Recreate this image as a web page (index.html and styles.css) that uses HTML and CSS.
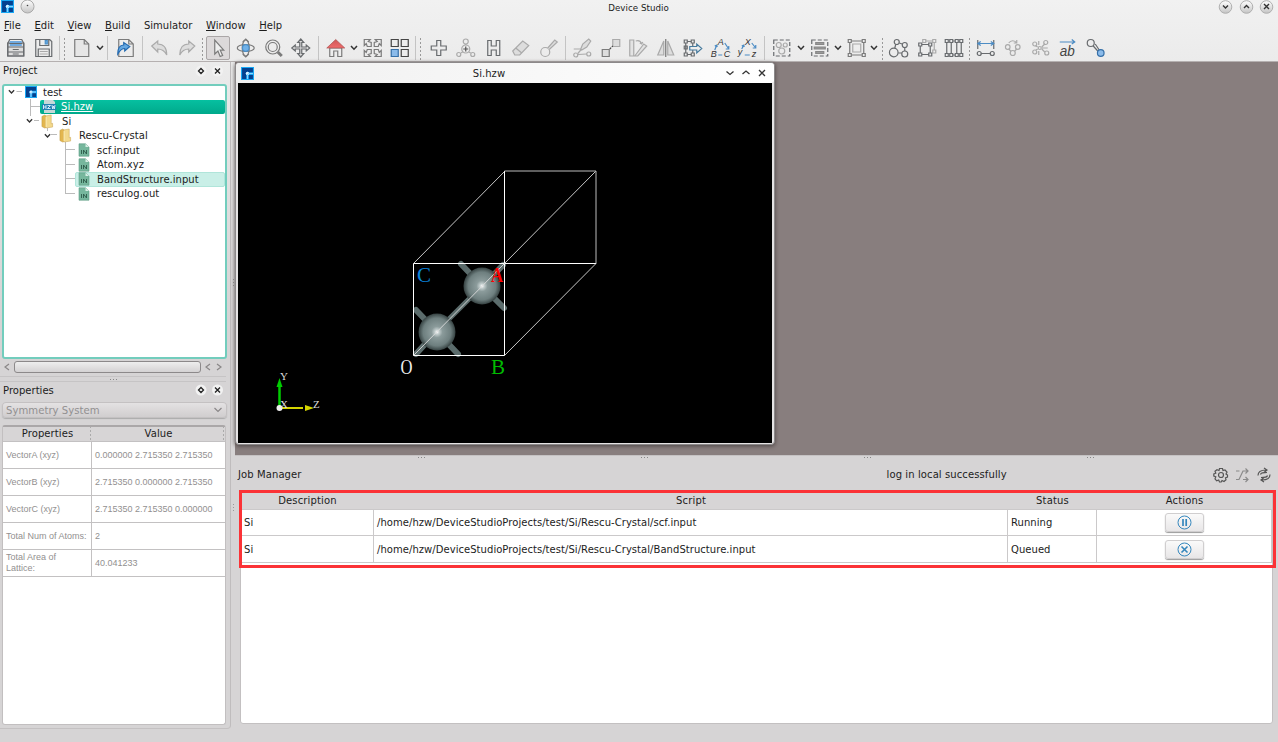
FILE: index.html
```html
<!DOCTYPE html>
<html lang="en">
<head>
<meta charset="utf-8">
<title>Device Studio</title>
<link rel="stylesheet" href="styles.css">
</head>
<body>
<svg class="defs" width="0" height="0">
  <defs>
    <symbol id="logo" viewBox="0 0 12 12"><path fill="#18a8f5" d="M0 0h12v12H0z"/><path fill="#05418f" d="M1 1h10v3.800H7L6 4.200 4.200 6 4.800 7v4H1zM7.300 7.300H11V11H7.300z"/><circle cx="6" cy="6" r="1.600" fill="#d8f1ff"/><path fill="#8fd4ff" d="M6.500 5.500H11v1H6.500zM5.500 6.500h1V11h-1z"/></symbol>
    <symbol id="folder" viewBox="0 0 14 16"><path fill="#e3b64e" stroke="#b98f35" stroke-width=".5" d="M1 2.500L4 1l2 1.500V14l-2 1-3-1.500z"/><path fill="#f3d98c" stroke="#c49b42" stroke-width=".5" d="M5 2l6-1v9.500l1.500-.5v4L5 15z"/><path stroke="#fff1bd" d="M5.500 3v11"/></symbol>
    <symbol id="infile" viewBox="0 0 12 14"><path fill="#76b79d" stroke="#5d9a83" stroke-width=".6" d="M1 .8h6.500L11 4v9.200H1z"/><path fill="#d8efe5" d="M7.500.8V4H11z"/><path fill="none" stroke="#2c5a4a" stroke-width=".9" d="M3.500 7v4M5.500 11V7l3 4V7"/></symbol>
    <symbol id="caret" viewBox="0 0 8 6"><path fill="none" stroke="#333" stroke-width="1.500" d="M1 1l3 3.200L7 1"/></symbol>
    <linearGradient id="pill" x2="0" y2="1"><stop stop-color="#fff"/><stop offset="1" stop-color="#c4c4c4"/></linearGradient>
    <linearGradient id="red" x2="0" y2="1"><stop stop-color="#ce5757"/><stop offset="1" stop-color="#ef6b6b"/></linearGradient>
    <radialGradient id="atom"><stop stop-color="#fff"/><stop offset=".12" stop-color="#c2cdcd"/><stop offset=".3" stop-color="#8b9b9b"/><stop offset=".75" stop-color="#6e7f7f"/><stop offset="1" stop-color="#354141"/></radialGradient>
  </defs>
</svg>

<header class="top">
  <div class="titlebar">
    <svg class="app-logo" width="13" height="13"><use href="#logo"/></svg>
    <svg class="orb" width="15" height="15"><circle cx="7.500" cy="7.500" r="6.500" fill="url(#pill)" stroke="#aaa"/><circle cx="7.500" cy="6.500" r=".8" fill="#444"/></svg>
    <span class="title">Device Studio</span>
    <div class="winbtns">
      <svg width="15" height="15"><circle cx="7.500" cy="7" r="6.300" fill="url(#pill)" stroke="#b0b0b0"/><path d="M5 5.500L7.500 8 10 5.500"/></svg>
      <svg width="15" height="15"><circle cx="7.500" cy="7" r="6.300" fill="url(#pill)" stroke="#b0b0b0"/><path d="M5 8L7.500 5.500 10 8"/></svg>
      <svg width="15" height="15"><circle cx="7.500" cy="7" r="6.300" fill="url(#pill)" stroke="#b0b0b0"/><path d="M5 4l5 5M10 4L5 9"/></svg>
    </div>
  </div>
  <nav class="menu">
    <span><u>F</u>ile</span><span><u>E</u>dit</span><span><u>V</u>iew</span><span><u>B</u>uild</span><span>Simulator</span><span><u>W</u>indow</span><span><u>H</u>elp</span>
  </nav>
  <div class="toolbar">
    <svg class="ic dk" viewBox="0 0 20 20"><path fill="#ddd" d="M2 5h16v13H2z"/><path fill="#6fa9e0" stroke="none" d="M4 3h12v5H4z"/><path d="M4 1.500h12l2 4v12.500H2V5.500zM2 9h16M2 14h16M7 11.500h6M7 16h6M3.500 5.500h13"/></svg>
    <svg class="ic dk" viewBox="0 0 20 20"><path d="M2 1.500h14l2 2V18.500H2zM6 1.500v6h9v-6M4.500 18v-7h11v7"/><path class="bf" d="M11.500 2.500h2v3.500h-2z"/><path class="lt" d="M6 13.500h8M6 16h8"/></svg>
    <div class="sep w11"><i></i><b></b></div>
    <svg class="ic" viewBox="0 0 20 20"><path fill="#e6e6e6" d="M3 1.500h9.500L17 6v12.500H3z"/><path d="M12.500 1.500V6H17"/></svg>
    <div class="dd w8"><svg width="8" height="6"><use href="#caret"/></svg></div>
    <div class="sep w8"><i></i></div>
    <svg class="ic" viewBox="0 0 20 20"><path d="M3 1.500h10l4.500 4.500v12.500H3zM13 1.500V6h4.500"/><path fill="#66a8e1" stroke="#246ab0" d="M2 16c0-6 2-9 6-9V4.500l6 4-5 4.500v-2.500c-3 0-5 2-7 5.500z"/></svg>
    <div class="sep w6"><i></i></div>
    <svg class="ic lt" viewBox="0 0 20 20"><path fill="#ddd" d="M2 8l6-5v3c6 0 9 4 9 11-2-4-4-6-9-6v3z"/></svg>
    <svg class="ic lt" viewBox="0 0 20 20"><path fill="#ddd" d="M18 8l-6-5v3C6 6 3 10 3 17c2-4 4-6 9-6v3z"/></svg>
    <div class="sep w4"><b></b></div>
    <div class="pressed"><svg class="ic" viewBox="0 0 20 20"><path fill="#eee" d="M6 2v14l3.200-3 2.200 5.500 2.500-1-2.400-5.300H15z"/></svg></div>
    <svg class="ic" viewBox="0 0 20 20"><ellipse cx="10" cy="10" rx="8.500" ry="3.500"/><ellipse cx="10" cy="10" rx="3.500" ry="8"/><circle class="bf" cx="10" cy="10" r="3.300"/><path d="M7 4l3-3 3 3M7 16l3 3 3-3"/></svg>
    <svg class="ic" viewBox="0 0 20 20"><circle cx="9" cy="9" r="7"/><circle cx="9" cy="9" r="4.500"/><path stroke-width="3" d="M14 14l4 4"/></svg>
    <svg class="ic dk" viewBox="0 0 20 20"><path fill="#ddd" d="M10 1l3 3.500h-2v4.500h4.500V7L19 10l-3.500 3v-2H11v4.500h2L10 19l-3-3.500h2V11H4.500v2L1 10l3.500-3v2H9V4.500H7z"/></svg>
    <div class="sep w7"><i></i></div>
    <svg class="ic" viewBox="0 0 20 20"><path fill="#eee" d="M4 10h12v8.500h-4V13H8v5.500H4z"/><path fill="url(#red)" stroke="#a95050" stroke-width=".7" d="M10 1.500L19 10H1z"/></svg>
    <div class="dd w9"><svg width="8" height="6"><use href="#caret"/></svg></div>
    <svg class="ic" viewBox="0 0 20 20"><path d="M1.500 1.500h6l-2 2 3 1v4h-4l-1-3-2 2zM18.500 1.500h-6l2 2-3 1v4h4l1-3 2 2zM1.500 18.500h6l-2-2 3-1v-4h-4l-1 3-2-2zM18.500 18.500h-6l2-2-3-1v-4h4l1 3 2-2z"/></svg>
    <svg class="ic" viewBox="0 0 20 20"><path stroke="#444" d="M1.500 1.500h7v7h-7zM11.500 1.500h7v7h-7zM11.500 11.500h7v7h-7z"/><path fill="#8bbbea" stroke="#356fa8" d="M1.500 11.500h7v7h-7z"/></svg>
    <div class="sep w11"><i></i><b></b></div>
    <svg class="ic dk" viewBox="0 0 20 20"><path d="M8 2.500h4V8h5.500v4H12v5.500H8V12H2.500V8H8z"/></svg>
    <svg class="ic lt" viewBox="0 0 20 20"><circle cx="10" cy="3.500" r="2.500"/><circle cx="10" cy="11" r="4"/><circle cx="3" cy="16.500" r="2"/><circle cx="17" cy="16.500" r="2"/><path d="M10 6v1M7 14l-2 1M13 14l2 1"/><path stroke="#555" d="M7.500 11h5M10 8.500v5"/></svg>
    <svg class="ic dk" viewBox="0 0 20 20"><path d="M4 2.500h3.500V8h5V2.500H16v15h-3.500V12h-5v5.500H4z"/></svg>
    <svg class="ic lt" viewBox="0 0 20 20"><path fill="#ddd" d="M2 13L12 3l6 4.500L9 17H4zM5 10l6 5"/></svg>
    <svg class="ic lt" viewBox="0 0 20 20"><circle cx="6.500" cy="14" r="4.500"/><path fill="#ddd" d="M9 10l7-8 2.500 2-8 7.500"/></svg>
    <div class="sep w7"><i></i></div>
    <svg class="ic lt" viewBox="0 0 20 20"><path fill="#ddd" d="M8 11l2-5 6-5 2 2-4 6-5 3z"/><circle cx="3" cy="17" r="2"/><circle cx="16" cy="16" r="2"/><path d="M5 16.500l9-.5M1 11h7M8.500 11.500L5 15.500"/></svg>
    <svg class="ic" viewBox="0 0 20 20"><path fill="#ddd" d="M1.500 11.500h7v7h-7z"/><path class="lt" fill="#ddd" d="M12 1.500h7v7h-7z"/><path stroke="#444" stroke-dasharray="2 1" d="M9 11l3-3"/></svg>
    <svg class="ic lt" viewBox="0 0 20 20"><path fill="#e3e3e3" d="M2 2h4v16H2zM7 18L16 6l3 2-9 10z"/><path d="M8 3c3-1 5 0 6 3M12 5l2 1 1-2"/></svg>
    <svg class="ic lt" viewBox="0 0 20 20"><path fill="#ddd" d="M8 3v14H2zM12 3v14h6z"/><path stroke="#777" d="M10 1v18"/></svg>
    <svg class="ic dk" viewBox="0 0 20 20"><path d="M1.500 2h3v3h-3zM8.500 2h3v3h-3zM1.500 15h3v3h-3zM8.500 15h3v3h-3zM1.500 8h3v3h-3zM3 5v10M10 5v3M10 12v3M5 3.500h3.500M5 16.500h3.500"/><path fill="#eee" stroke="#477b9e" d="M7 8.500h7V6l5 4.500-5 4.500v-3H7z"/></svg>
    <svg class="ic" viewBox="0 0 20 20"><path class="bl" d="M4 12l2-5M14 5l4 6M7.500 17h4M4 8l2-1 .500 2M18 8v3h-3"/><text x="7" y="7">A</text><text x="0" y="19">B</text><text x="13" y="19">C</text></svg>
    <svg class="ic" viewBox="0 0 20 20"><path class="bl" d="M4 11l2-4M14 5l4 5M7 17h5M4 8l2-1 .500 2M18 7v3h-3"/><text x="7" y="7">X</text><text x="0" y="17">y</text><text x="14" y="19">z</text></svg>
    <div class="sep w6"><i></i></div>
    <svg class="ic dk" viewBox="0 0 20 20"><path stroke-dasharray="4 2" d="M2 2h16v16H2z"/><circle class="lt" cx="7" cy="7" r="2.500"/><circle class="lt" cx="13.500" cy="7" r="2"/><circle class="lt" cx="10" cy="13" r="3"/></svg>
    <div class="dd w10"><svg width="8" height="6"><use href="#caret"/></svg></div>
    <svg class="ic dk" viewBox="0 0 20 20"><path stroke-dasharray="4 2" d="M2 2h16v16H2z"/><path fill="#999" stroke="#888" d="M6 4.500h8v2H6zM4.500 9h11v2h-11zM6 13.500h8v2H6z"/></svg>
    <div class="dd w10"><svg width="8" height="6"><use href="#caret"/></svg></div>
    <svg class="ic" viewBox="0 0 20 20"><path class="lt" d="M6 6h8v8H6z"/><path d="M3 5v10M17 5v10M5 3h10M5 17h10M1.500 1.500h3v3h-3zM15.500 1.500h3v3h-3zM1.500 15.500h3v3h-3zM15.500 15.500h3v3h-3z"/></svg>
    <div class="dd w14"><svg width="8" height="6"><use href="#caret"/></svg><b></b></div>
    <svg class="ic dk" viewBox="0 0 20 20"><circle cx="8" cy="4" r="2.500"/><circle cx="16" cy="7" r="2.500"/><circle cx="5" cy="14.500" r="4.300"/><circle cx="16" cy="16" r="3"/><path d="M7 6.500L6 10M10.500 5l3 1M16 9.500V13M9.500 15H13"/></svg>
    <svg class="ic dk" viewBox="0 0 20 20"><path class="lt" d="M6 1.500h3v3H6zM16 1.500h3v3h-3zM16 12h3v3h-3zM9 3h7M17.500 5v7"/><path d="M2 5h3v3H2zM12 5h3v3h-3zM2 15h3v3H2zM12 15h3v3h-3zM5 6.500h7M5 16.500h7M3.500 8v7M13.500 8v7"/></svg>
    <svg class="ic dk" viewBox="0 0 20 20"><path d="M1.500 1.500h3v3h-3zM6 1.500h3v3H6zM11.500 1.500h3v3h-3zM16 1.500h3v3h-3zM1.500 15.500h3v3h-3zM6 15.500h3v3H6zM11.500 15.500h3v3h-3zM16 15.500h3v3h-3zM3 5v10M7.500 5v10M13 5v10M17.500 5v10M9 3h3M9 17h3"/></svg>
    <div class="sep w4"><b></b></div>
    <svg class="ic dk" viewBox="0 0 20 20"><path d="M2 2v9M18 2v9M5 15.500h10"/><path class="bl" d="M2 5.500h16M5 3.500l-3 2 3 2M15 3.500l3 2-3 2"/><circle cx="3.500" cy="15.500" r="2"/><circle cx="16.500" cy="15.500" r="2"/></svg>
    <svg class="ic lt" viewBox="0 0 20 20"><circle cx="5" cy="9" r="2.300"/><circle cx="15" cy="9" r="2.300"/><circle cx="10" cy="15" r="2.500"/><path d="M6 11l2 2M14 11l-2 2M6 5c2-3 6-3 8 0M11 5h3V2"/></svg>
    <svg class="ic lt" viewBox="0 0 20 20"><circle cx="4" cy="6" r="2"/><circle cx="4" cy="14" r="2"/><circle cx="15" cy="4.500" r="2"/><circle cx="16" cy="15" r="2"/><circle cx="9" cy="10" r="1.500"/><path d="M5 8l2 1M5 12l2-1M11 10h6M11 9l3-3M11 11l3 3M8 3v4M8 17v-4"/></svg>
    <svg class="ic" viewBox="0 0 20 20"><text class="ab" x="2" y="18" textLength="15" lengthAdjust="spacingAndGlyphs">ab</text><path class="bl" d="M2 4h15M14 1.500L17 4l-3 2"/></svg>
    <svg class="ic dk" viewBox="0 0 20 20"><circle cx="5" cy="5" r="3.500"/><path d="M7.500 8l4.500 5M9.500 6l4 6"/><circle cx="15" cy="15" r="3.300" fill="#8bbbea" stroke="#356fa8"/></svg>
  </div>
</header>

<main class="work">
  <aside class="left">
    <section class="dock project">
      <div class="dock-title"><span>Project</span><svg width="28" height="12"><circle cx="6" cy="6" r="5.500" fill="#f2f2f2"/><path d="M6 3.500L8.500 6 6 8.500 3.500 6z"/><circle cx="22.500" cy="6" r="5.500" fill="#f2f2f2"/><path d="M20 3.500l5 5M25 3.500l-5 5"/></svg></div>
      <div class="tree">
        <div class="lines"><svg width="110" height="120"><path stroke="#bbb" fill="none" d="M12.500 6.500H18M26.500 14v17M26.500 21.500H36M30 35.500h5M43.500 43v3M47 49.500h6M61.500 57v52M61.500 64.500H71M61.500 79.500H71M61.500 93.500H71M61.500 108.500H71"/></svg></div>
        <div class="row d0"><svg class="arrow" width="7" height="6"><use href="#caret"/></svg><svg width="12" height="12"><use href="#logo"/></svg><span>test</span></div>
        <div class="row d1 selected"><svg width="14" height="13" viewBox="0 0 14 13"><path fill="#c5d8d8" d="M2 0h9l2 2v11H2z"/><path fill="#2381b3" d="M0 4h14v6H0z"/><path stroke="#e1f4ff" fill="none" stroke-width=".9" d="M1.500 5v4M4 5v4M1.500 7H4M5.500 5.500h3l-3 3h3M10 5l.7 4 .8-3 .8 3 .7-4"/></svg><span>Si.hzw</span></div>
        <div class="row d2"><svg class="arrow" width="7" height="6"><use href="#caret"/></svg><svg width="13" height="15"><use href="#folder"/></svg><span>Si</span></div>
        <div class="row d3"><svg class="arrow" width="7" height="6"><use href="#caret"/></svg><svg width="13" height="15"><use href="#folder"/></svg><span>Rescu-Crystal</span></div>
        <div class="row d4"><svg width="12" height="14"><use href="#infile"/></svg><span>scf.input</span></div>
        <div class="row d4"><svg width="12" height="14"><use href="#infile"/></svg><span>Atom.xyz</span></div>
        <div class="row d4 hover"><svg width="12" height="14"><use href="#infile"/></svg><span>BandStructure.input</span></div>
        <div class="row d4"><svg width="12" height="14"><use href="#infile"/></svg><span>resculog.out</span></div>
      </div>
      <div class="hscroll"><svg width="8" height="8"><path d="M6 1L2 4l4 3"/></svg><div class="thumb"></div><svg width="8" height="8"><path d="M6 1L2 4l4 3"/></svg><svg width="8" height="8"><path d="M2 1l4 3-4 3"/></svg></div>
    </section>
    <div class="hgrip"><i></i></div>
    <section class="dock props">
      <div class="dock-title"><span>Properties</span><svg width="28" height="12"><circle cx="6" cy="6" r="5.500" fill="#f2f2f2"/><path d="M6 3.500L8.500 6 6 8.500 3.500 6z"/><circle cx="22.500" cy="6" r="5.500" fill="#f2f2f2"/><path d="M20 3.500l5 5M25 3.500l-5 5"/></svg></div>
      <div class="combo"><span>Symmetry System</span><svg width="10" height="8"><path d="M1.500 2L5 5.500 8.500 2"/></svg></div>
      <div class="ptable">
        <div class="prow phead"><span>Properties</span><span>Value</span></div>
        <div class="prow"><span>VectorA (xyz)</span><span>0.000000 2.715350 2.715350</span></div>
        <div class="prow"><span>VectorB (xyz)</span><span>2.715350 0.000000 2.715350</span></div>
        <div class="prow"><span>VectorC (xyz)</span><span>2.715350 2.715350 0.000000</span></div>
        <div class="prow"><span>Total Num of Atoms:</span><span>2</span></div>
        <div class="prow"><span>Total Area of<br>Lattice:</span><span>40.041233</span></div>
      </div>
    </section>
  </aside>
  <div class="vgrip"><i></i><i></i></div>
  <div class="right">
    <section class="mdi">
      <div class="subwin">
        <div class="sub-title"><svg width="13" height="13"><use href="#logo"/></svg><span>Si.hzw</span><svg class="subbtns" width="42" height="12"><path d="M2.500 4.500L6 7.500l3.500-3M18.500 7L22 4l3.500 3M35 3l6 6M41 3l-6 6"/></svg></div>
        <svg class="scene" viewBox="238 83 534 360">
          <g stroke="#5b6c6c" stroke-width="6" stroke-linecap="round"><path d="M416 310l21 22 21 22M416 354l20-22M461 264l21 22 22 22M483 286l20-21"/><path stroke-width="5" d="M436 332l46-46"/></g>
          <circle cx="437" cy="332" r="18.500" fill="url(#atom)"/><circle cx="482" cy="286" r="18.500" fill="url(#atom)"/>
          <g fill="none" stroke="#fff"><path d="M413.500 355.500v-92h91v92z"/><path stroke="#bbb" d="M504.500 171h91.500v92.500"/><path d="M504.500 263.500V171M504.500 263.500H596"/><path stroke="#ddd" stroke-width=".9" d="M413.500 263.500l91-92M504.500 355.500l91.500-92M413.500 355.500l182-184"/></g>
          <g class="mono"><text x="417" y="282" fill="#0a83dc">C</text><text x="400.500" y="373.500" fill="#eee" textLength="12" lengthAdjust="spacingAndGlyphs">O</text><text x="491" y="373.500" fill="#0b0">B</text><text class="bold" x="491" y="282" fill="#f00" textLength="12" lengthAdjust="spacingAndGlyphs">A</text></g>
          <path stroke="#0c0" stroke-width="2.500" d="M279.500 407v-20"/><path fill="#0c0" d="M276.500 387h6l-3-9z"/><path stroke="#d4d400" stroke-width="2" d="M281 408h22"/><path fill="#d4d400" d="M305 405v6l9-3z"/><circle cx="279.500" cy="408" r="3" fill="#eee"/>
          <g class="axis"><text x="280" y="380">Y</text><text x="280" y="408">X</text><text x="313" y="408">Z</text></g>
        </svg>
      </div>
    </section>
    <section class="jobs">
      <div class="dots"><i></i><i></i><i></i><i></i></div>
      <div class="jobbar">
        <span>Job Manager</span><span class="status">log in local successfully</span>
        <svg width="58" height="16" viewBox="0 0 58 16"><path stroke="#555" stroke-width="1.200" d="M6.500 1.500h3l.5 2 2-.5 2 2-1 2 1.500 1v2l-2 .800.5 2-2 1.700-2-1-.8 1.500H6.500l-.800-2-2 .8-1.700-2 .8-2-2-.8V7l2-.8-.8-2 2-1.500 2 .8z"/><circle stroke="#555" stroke-width="1.200" cx="8" cy="8" r="2.500"/><path stroke="#8a8a8a" stroke-width="1.200" d="M23 12.500h3L30 4h5M23 4h3.500M30 12.500h5M32.500 1.500L35 4l-2.500 2.500M32.500 10l2.500 2.500-2.500 2.500"/><path stroke="#555" stroke-width="1.200" d="M45 8.500c0-5 4-5.500 8-5.500M51 1l3 2-3 2.500M47.500 7.500C48 5.500 50 5.500 54 5.500M57 7.500c0 5-4 5.500-8 5.500M51 15l-3-2 3-2.500M54.500 8.500C54 10.500 52 10.500 48 10.500"/></svg>
      </div>
      <div class="jobtable">
        <div class="jrow jhead"><span>Description</span><span>Script</span><span>Status</span><span>Actions</span></div>
        <div class="jrow"><span>Si</span><span>/home/hzw/DeviceStudioProjects/test/Si/Rescu-Crystal/scf.input</span><span>Running</span><span><button class="act"><svg width="15" height="15"><circle cx="7.500" cy="7.500" r="6.500"/><path stroke-width="1.700" d="M6 4v7M9.200 4v7"/></svg></button></span></div>
        <div class="jrow"><span>Si</span><span>/home/hzw/DeviceStudioProjects/test/Si/Rescu-Crystal/BandStructure.input</span><span>Queued</span><span><button class="act"><svg width="15" height="15"><circle cx="7.500" cy="7.500" r="6.500"/><path stroke-width="1.600" d="M4.500 4.500l6 6M10.500 4.500l-6 6"/></svg></button></span></div>
        <div class="mark"></div>
      </div>
    </section>
  </div>
</main>
</body>
</html>
```
FILE: styles.css
```css
* { box-sizing: border-box; }
body { margin: 0; width: 1278px; height: 742px; overflow: hidden; font: 10px "DejaVu Sans", sans-serif; color: #1c1c1c; letter-spacing: .03px; background: linear-gradient(#f1f1f1, #ebebeb 62px, #d6d4d5 320px); display: flex; flex-direction: column; }
.defs { position: absolute; }
svg { display: block; flex: none; fill: none; }
.top { height: 62px; flex: none; border-bottom: 1px solid #b5b0b0; }
.titlebar { height: 15px; display: flex; align-items: center; padding: 0 4px 0 1px; }
.app-logo { margin-top: -2px; }
.orb { margin: -2px 0 0 6px; }
.title { flex: 1; text-align: center; font-size: 8.700px; padding-left: 24px; }
.winbtns { display: flex; gap: 5.500px; }
.winbtns svg path { stroke: #333; stroke-width: 1.400; }
.menu { height: 21px; display: flex; align-items: center; gap: 13.600px; padding-left: 4px; }
.menu u { text-decoration: underline; text-underline-offset: 1px; }
.toolbar { height: 24px; display: flex; align-items: center; padding-left: 2px; letter-spacing: 0; }
.ic { width: 27.500px; height: 20px; stroke: #7b7b7b; stroke-width: 1.200; flex: none; }
.ic text { font: italic 9px "Liberation Sans", sans-serif; fill: #333; stroke: none; }
.ic text.ab { font-size: 15px; fill: #444; }
.dk { stroke: #686b6e; }
.lt { stroke: #aaa; }
.bl { stroke: #4c8cc4; }
.bf { fill: #70b1e8; stroke: #4b8fc8; }
.pressed { background: #dcd9da; border: 1px solid #aaa6a7; border-radius: 2px; width: 24px; height: 24px; margin: 0 1.750px; display: flex; align-items: center; justify-content: center; flex: none; }
.sep, .dd { display: flex; align-items: center; justify-content: center; gap: 3px; flex: none; }
.sep i { width: 1px; height: 24px; background: #c4c4c4; }
.sep b, .dd b { width: 4px; height: 23px; flex: none; background: radial-gradient(circle, #999 0 .7px, transparent 1px) 0 0 / 3px 4px; }
.w4 { width: 4px; } .w6 { width: 6.500px; } .w7 { width: 7px; } .w8 { width: 8px; } .w9 { width: 9.500px; } .w10 { width: 10px; } .w11 { width: 11px; } .w14 { width: 14.500px; }
.work { flex: 1; display: flex; min-height: 0; }
.left { width: 231px; border-right: 1px solid #bfbcbd; padding-right: 4px; margin-bottom: 13px; border-bottom: 1px solid #c4c1c2; border-radius: 0 0 4px 0; }
.dock-title { display: flex; align-items: center; justify-content: space-between; height: 17px; padding: 0 3px; }
.dock-title path { stroke: #222; stroke-width: 1.300; }
.project { height: 315px; border-bottom: 1px solid #c6c4c5; }
.tree { margin: 5px 0 0 2px; height: 275px; width: 224.500px; border: 2px solid #72cdbd; border-radius: 3px; background: #fff; position: relative; }
.lines { position: absolute; left: 0; top: -1px; }
.row { height: 14.500px; display: flex; align-items: center; gap: 6px; position: relative; top: -1px; white-space: nowrap; }
.arrow { margin-right: 4px; }
.d0 { padding-left: 4px; }
.d1 { margin-left: 36px; padding-left: 2px; gap: 5px; }
.d2 { padding-left: 22px; gap: 8px; }
.d2 .arrow, .d3 .arrow { margin-right: 0; }
.d3 { padding-left: 40px; gap: 7.500px; }
.d4 { margin-left: 71px; padding-left: 3px; gap: 7px; }
.selected { background: linear-gradient(#06c0a0, #00a98b); border-radius: 2px; color: #fff; text-decoration: underline; }
.hover { background: #c9efe7; border: 1px solid #b0e5da; border-radius: 2px; padding-left: 2px; }
.hscroll { display: flex; align-items: center; height: 15px; padding: 0 0 0 3px; gap: 3px; }
.hscroll path, .combo path { stroke: #8a8788; stroke-width: 1.200; }
.thumb { width: 187px; height: 12px; border: 1.500px solid #8c898a; border-radius: 3px; background: linear-gradient(#eee, #d4d2d3); }
.hgrip { height: 4px; display: flex; justify-content: center; align-items: center; }
.hgrip i, .dots i { width: 9px; height: 3px; background: radial-gradient(circle, #888 .8px, transparent 1px) 0 0 / 3px 3px; }
.props { border-top: 1px solid #c6c4c5; height: 345px; }
.props .dock-title { height: 16px; }
.combo { margin: 4px 0 0 2px; width: 225px; height: 16px; border-radius: 4px; background: linear-gradient(#e5e3e4, #cfcccd); box-shadow: inset 0 0 0 1px #c4c1c2, 0 1px 1px #aaa; color: #929091; display: flex; align-items: center; justify-content: space-between; padding: 0 4px; font-size: 10.100px; }
.ptable { margin: 7px 0 0 2px; width: 224px; height: 300px; background: #fff; border: 1px solid #c2bfc0; border-top: 2px solid #aaa7a8; border-radius: 3px; font: 9px "Liberation Sans", sans-serif; letter-spacing: 0; color: #929090; }
.prow { display: grid; grid-template-columns: 89px 1fr; height: 27px; }
.prow span { border: solid #c3c1c2; border-width: 0 1px 1px 0; padding: 0 3px; display: flex; align-items: center; white-space: nowrap; line-height: 11px; }
.prow span:last-child { border-right: 0; }
.phead { height: 15px; background: #d7d5d6; color: #1c1c1c; font: 10px "DejaVu Sans", sans-serif; letter-spacing: .1px; }
.prow.phead span { justify-content: center; border-right: 0; padding-bottom: 2px; }
.phead span, .jhead span { background: radial-gradient(circle, #aaa .8px, transparent 1px) right 0 top 2px / 3px 4px repeat-y; }
.vgrip { width: 4px; display: flex; flex-direction: column; align-items: center; }
.vgrip i { width: 3px; height: 9px; margin-top: 216px; background: radial-gradient(circle, #999 .8px, transparent 1px) 0 0 / 3px 3px; }
.right { flex: 1; min-width: 0; }
.mdi { height: 393px; background: #887e7e; }
.subwin { width: 540px; height: 383px; background: #e5e3e4; border: 1px solid #8c898a; border-radius: 4px; padding: 0 2px; box-shadow: 0 1px 4px #4b4444; }
.sub-title { height: 20px; margin: 0 -2px; padding: 0 8px 0 5px; background: linear-gradient(90deg, #efefef, #fff); border-radius: 3px; display: flex; align-items: center; }
.sub-title span { flex: 1; text-align: center; }
.subbtns path { stroke: #333; stroke-width: 1.300; }
.scene { background: #000; width: 534px; height: 360px; letter-spacing: 0; }
.mono text { font: 21px "Liberation Serif", serif; }
.mono text.bold { font-weight: bold; }
.axis text { font: 11px "Liberation Serif", serif; fill: #ddd; }
.jobs { border-top: 1px solid #c5c2c3; }
.dots { height: 4px; display: flex; padding-left: 182px; gap: 214px; }
.jobbar { display: flex; align-items: center; height: 30px; padding: 0 7px 0 3px; }
.jobbar span { position: relative; top: -.5px; letter-spacing: .1px; }
.status { margin: 0 auto 0 585px; }
.jobtable { margin-left: 5px; width: 1033px; height: 234px; background: #fff; border: 1px solid #c3c0c1; border-radius: 3px; position: relative; letter-spacing: .05px; }
.jrow { display: grid; grid-template-columns: 133px 634px 89px 1fr; height: 27px; padding-right: 0; }
.jrow span { border: solid #cbc9ca; border-width: 0 1px 1px 0; padding: 0 3px; display: flex; align-items: center; white-space: nowrap; }
.jrow span:last-child { justify-content: center; }
.jhead { height: 19px; background: #d7d5d6; letter-spacing: .15px; }
.jhead span { justify-content: center; border-right: 0; padding-top: 1px; background-position: right 1px top 6px; background-clip: content-box; }
.jhead + .jrow { height: 26px; }
.act { width: 39px; height: 19px; padding: 0; display: flex; align-items: center; justify-content: center; border: 1px solid #d0cecf; border-radius: 3px; background: linear-gradient(#fafafa, #e8e6e7); box-shadow: 0 1px 1px #999; }
.act svg { stroke: #3587bd; }
.mark { position: absolute; left: -2px; top: -1px; width: 1037px; height: 78px; border: 3px solid #fb3236; }
```
